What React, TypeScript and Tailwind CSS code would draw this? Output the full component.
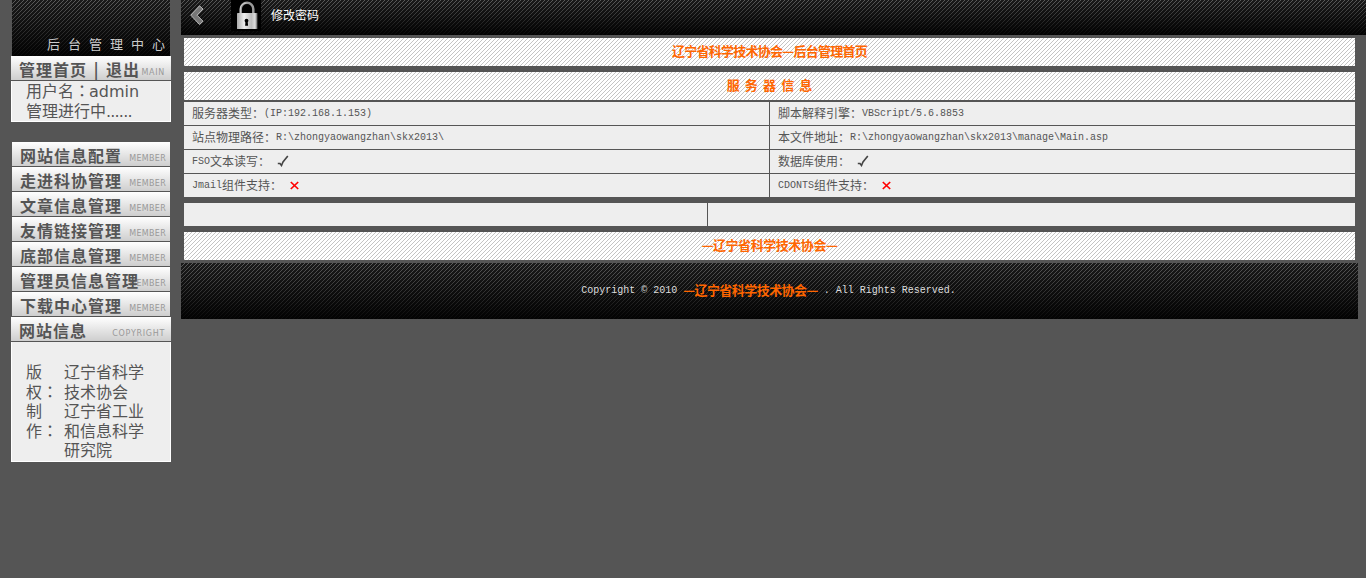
import React from "react";

const darkStripes =
  "bg-[linear-gradient(to_bottom,transparent,rgba(0,0,0,0.9)),linear-gradient(135deg,transparent_43.75%,#5c5c5c_43.75%,#5c5c5c_56.25%,transparent_56.25%)] bg-[length:100%_100%,4px_4px] bg-[#1a1a1a]";
const lightStripes =
  "bg-[linear-gradient(135deg,transparent_43.75%,#c4c4c4_43.75%,#c4c4c4_56.25%,transparent_56.25%)] bg-[length:4px_4px] bg-white";

const Mono = ({ children }: { children: React.ReactNode }) => (
  <span className="font-['Liberation_Mono','Noto_Sans_CJK_SC',monospace] text-[10px]">{children}</span>
);

const Colon = () => <span className="font-['Noto_Sans_CJK_TC',sans-serif]">：</span>;

function Heading({ title, tag, wide }: { title: string; tag: string; wide?: boolean }) {
  return (
    <div
      className={`relative flex h-[25px] items-center border-b border-[#555] bg-linear-to-b from-white to-[#cecece] pl-2 ${
        wide ? "w-[160px]" : "ml-px w-[158px]"
      }`}
    >
      <span
        className={`absolute bottom-[2px] font-['DejaVu_Sans',sans-serif] text-[8px] leading-[11px] text-[#999] ${
          wide ? "right-[6px] tracking-[0.7px]" : "right-[4px] tracking-[0.3px]"
        }`}
      >
        {tag}
      </span>
      <span className="relative pt-px text-[16px] leading-5 font-bold tracking-[1px] [word-spacing:2px] whitespace-pre">{title}</span>
    </div>
  );
}

const Check = () => (
  <svg className="ml-[7px] h-3 w-3" viewBox="0 0 12 12" fill="none" stroke="#444">
    <path d="M.8 8.5H3L4.5 10.5 6 7 10.8 1" strokeWidth="1.6" />
  </svg>
);
const Cross = () => (
  <svg className="ml-2 h-[9px] w-[9px]" viewBox="0 0 9 9" fill="none" stroke="#f00">
    <path d="M.8 1 8.2 8M8.2 1 .8 8" strokeWidth="1.7" />
  </svg>
);

function Row({ left, right }: { left: React.ReactNode; right: React.ReactNode }) {
  return (
    <div className="flex h-[23px] gap-px leading-[20px]">
      <div className="flex w-[585px] items-center bg-[#eee] pb-px pl-2 whitespace-pre [&>span]:pt-[2px]">{left}</div>
      <div className="flex flex-1 items-center bg-[#eee] pb-px pl-2 whitespace-pre [&>span]:pt-[2px]">{right}</div>
    </div>
  );
}

function Banner({ children, className = "" }: { children: React.ReactNode; className?: string }) {
  return (
    <div className={`mx-[3px] flex h-7 w-[1171px] items-center justify-center pb-[3px] text-[13px] font-bold text-[#f60] ${lightStripes} ${className}`}>
      {children}
    </div>
  );
}

const items = ["网站信息配置", "走进科协管理", "文章信息管理", "友情链接管理", "底部信息管理", "管理员信息管理", "下载中心管理"];

export default function App() {
  return (
    <div className="flex h-[578px] w-[1366px] overflow-hidden bg-[#555] font-['Noto_Sans_CJK_SC',sans-serif] text-[12px] text-[#555]">
      <aside className="ml-[11px] w-[160px] shrink-0">
        <div className={`ml-px flex h-14 w-[158px] items-end justify-end pb-[3px] text-[13px] leading-[18px] tracking-[8px] whitespace-nowrap text-[#ccc] ${darkStripes}`}>
          <span className="-mr-[3px]">后台管理中心</span>
        </div>
        <Heading title="管理首页 | 退出" tag="MAIN" wide />
        <div className="h-[41px] border border-t-0 border-white bg-[#eee] pl-[14px] text-[16px] leading-[18px]">
          <div className="h-5">
            用户名<Colon /><span className="-ml-px font-['DejaVu_Sans',sans-serif]">admin</span>
          </div>
          <div className="h-5">
            管理进行中<span className="font-['DejaVu_Sans',sans-serif] tracking-[-0.8px]">......</span>
          </div>
        </div>
        <div className="h-5" />
        {items.map((t) => (
          <Heading key={t} title={t} tag="MEMBER" />
        ))}
        <Heading title="网站信息" tag="COPYRIGHT" wide />
        <div className="flex h-[120px] border border-t-0 border-white bg-[#eee] pt-[20px] pl-[14px] text-[16px] leading-[19.6px]">
          <div className="w-[38px]">
            <div className="h-[19.6px]">版</div>
            <div className="h-[19.6px]">权<Colon /></div>
            <div className="h-[19.6px]">制</div>
            <div className="h-[19.6px]">作<Colon /></div>
          </div>
          <div className="whitespace-nowrap">
            辽宁省科学<br />技术协会<br />辽宁省工业<br />和信息科学<br />研究院
          </div>
        </div>
      </aside>

      <main className="ml-[10px] w-[1185px] shrink-0">
        <header className={`flex h-[35px] items-start text-white ${darkStripes}`}>
          <svg className="mt-[5px] ml-[9px] h-5 w-[14px]" viewBox="0 0 14 20">
            <path d="M9.5.8 13 4 7 10.2 13 16.2 9.5 19.5.8 10.2Z" fill="#777" stroke="#bbb" strokeWidth="1" />
          </svg>
          <svg className="ml-[27px] h-[31px] w-[30px]" viewBox="0 0 30 31">
            <defs>
              <linearGradient id="lockBody">
                <stop offset="0" stopColor="#aaa" />
                <stop offset=".35" stopColor="#eee" />
                <stop offset=".7" stopColor="#bbb" />
                <stop offset=".88" stopColor="#ddd" />
                <stop offset="1" stopColor="#555" />
              </linearGradient>
            </defs>
            <rect width="30" height="31" fill="#000" />
            <path d="M9.7 14V9a6.3 6.2 0 0 1 12.6 0v5" fill="none" stroke="#999" strokeWidth="2.5" />
            <path d="M9.3 13V9a6 6 0 0 1 6-6" fill="none" stroke="#ddd" strokeWidth=".8" />
            <rect x="6" y="13" width="20.5" height="16" rx=".6" fill="url(#lockBody)" />
            <circle cx="15.5" cy="20.7" r="1.9" fill="#000" />
            <path d="M14.7 20h1.8l.6 5.8h-3Z" fill="#000" />
          </svg>
          <span className="ml-[10px] leading-[30px]">修改密码</span>
        </header>
        <Banner className="mt-[3px] tracking-[-0.75px]">辽宁省科学技术协会—后台管理首页</Banner>
        <Banner className="mt-[6px] [word-spacing:2.2px]">服 务 器 信 息</Banner>
        <section className="mx-[3px] mt-[2px] flex w-[1171px] flex-col gap-px">
          <Row left={<>服务器类型：<Mono>(IP:192.168.1.153)</Mono></>} right={<>脚本解释引擎：<Mono>VBScript/5.6.8853</Mono></>} />
          <Row left={<>站点物理路径：<Mono>R:\zhongyaowangzhan\skx2013\</Mono></>} right={<>本文件地址：<Mono>R:\zhongyaowangzhan\skx2013\manage\Main.asp</Mono></>} />
          <Row left={<><Mono>FSO</Mono>文本读写：<Check /></>} right={<>数据库使用：<Check /></>} />
          <Row left={<><Mono>Jmail</Mono>组件支持：<Cross /></>} right={<><Mono>CDONTS</Mono>组件支持：<Cross /></>} />
        </section>
        <div className="mx-[3px] mt-[6px] flex h-[23px] w-[1171px] gap-px">
          <div className="w-[523px] bg-[#eee]" />
          <div className="flex-1 bg-[#eee]" />
        </div>
        <Banner className="mt-[6px] tracking-[-0.45px]">—辽宁省科学技术协会—</Banner>
        <footer className={`mt-[3px] flex h-14 w-[1177px] items-center justify-center pr-[2px] pb-[2px] text-[#ddd] whitespace-pre ${darkStripes}`}>
          <Mono>{"Copyright © 2010 "}</Mono>
          <span className="text-[13px] font-bold tracking-[-0.55px] text-[#f60]">—辽宁省科学技术协会—</span>
          <Mono>{" . All Rights Reserved."}</Mono>
        </footer>
      </main>
    </div>
  );
}
